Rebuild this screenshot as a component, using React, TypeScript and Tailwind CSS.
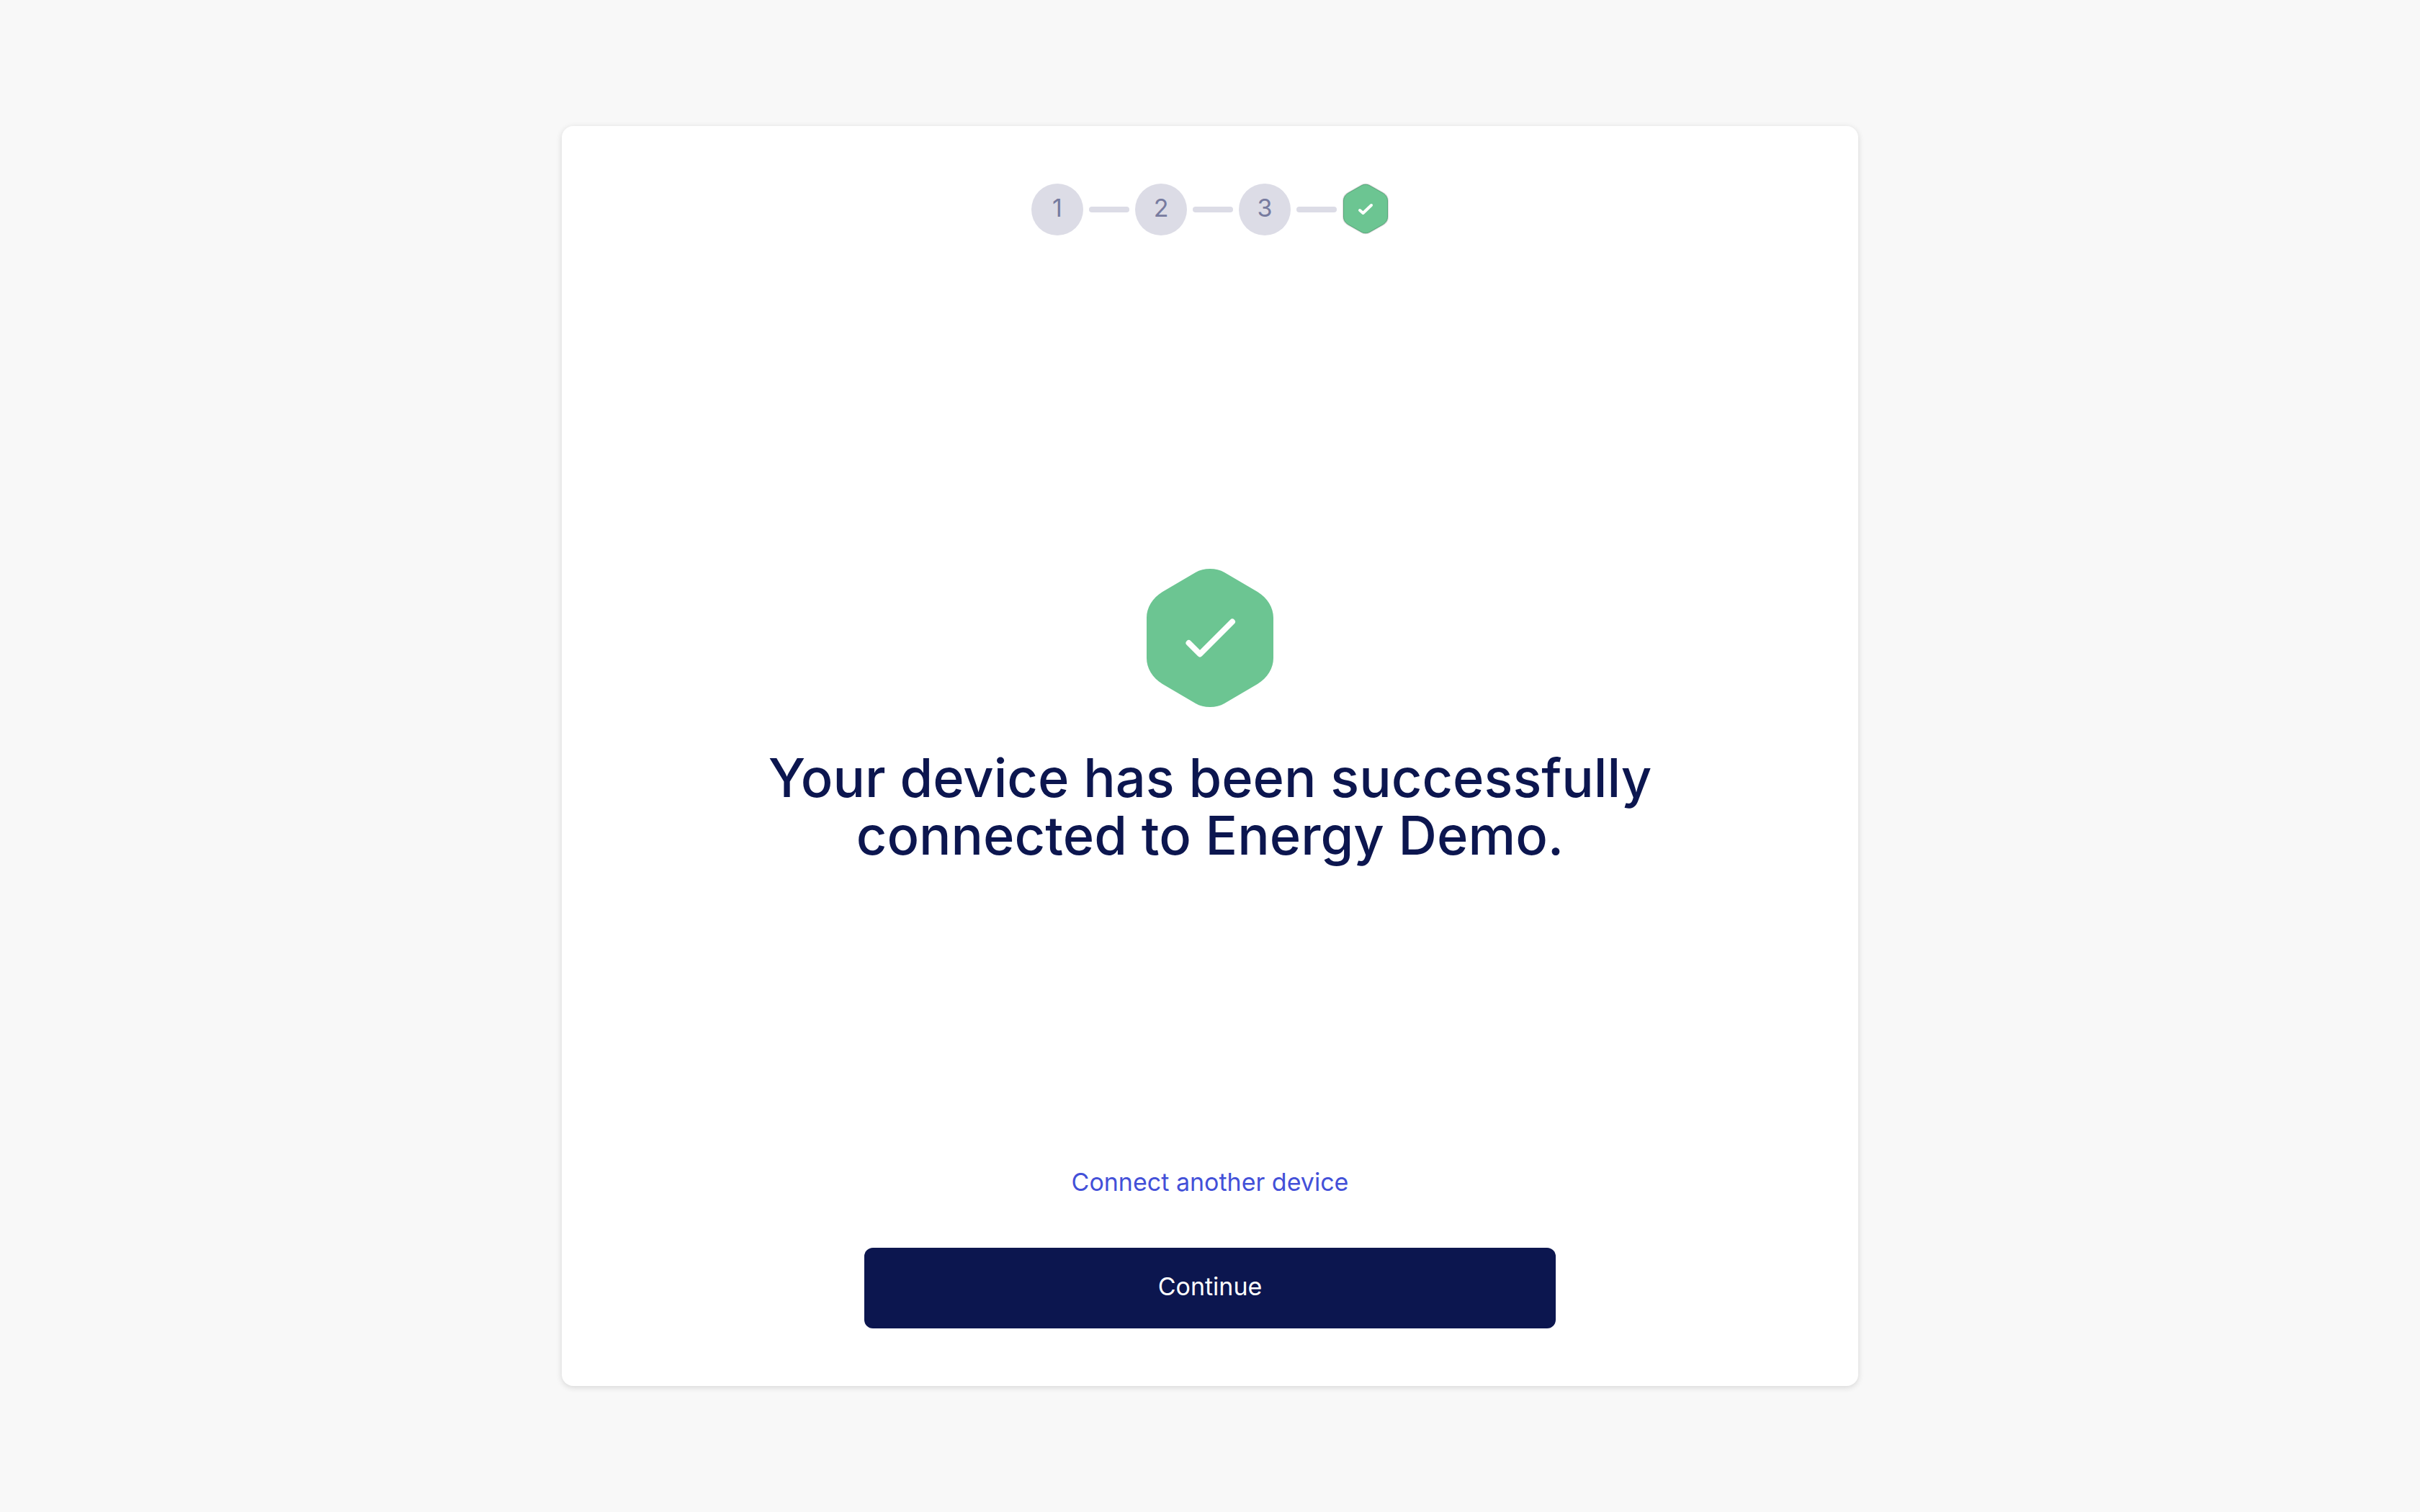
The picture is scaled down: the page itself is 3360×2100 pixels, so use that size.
import { Fragment } from 'react';

const steps = [1, 2, 3];

function StepDone() {
  return (
    <svg role="img" aria-label="Completed" viewBox="0 0 64 72" className="h-[72px] w-16 overflow-visible">
      <path
        d="M26 3C29.5 0.8 34.5 0.8 38 3L56.5 13.5C60.5 16 62.5 20 62.5 24V46C62.5 50 60.5 54 56.5 56.5L38 67C34.5 69.2 29.5 69.2 26 67L7.5 56.5C3.5 54 1.5 50 1.5 46V24C1.5 20 3.5 16 7.500 13.5Z"
        fill="#6cc592"
        stroke="#000"
        strokeOpacity="0.14"
        strokeWidth="3"
      />
      <path
        d="M26 3C29.5 0.8 34.5 0.8 38 3L56.5 13.5C60.5 16 62.5 20 62.5 24V46C62.5 50 60.5 54 56.5 56.5L38 67C34.5 69.2 29.5 69.2 26 67L7.5 56.5C3.5 54 1.5 50 1.5 46V24C1.5 20 3.5 16 7.5 13.5Z"
        fill="#6cc592"
        stroke="#5aa97c"
        strokeWidth="1"
      />
      <path d="M24 37L28.5 41L40 30" fill="none" stroke="#fff" strokeWidth="4" strokeLinecap="round" strokeLinejoin="round" />
    </svg>
  );
}

function SuccessBadge() {
  return (
    <svg aria-hidden="true" viewBox="0 0 176 192" className="h-48 w-44">
      <path
        d="M68 5C79 -1.6 97 -1.6 108 5L154 32C168 40.5 176 54 176 68V124C176 138 168 151.5 154 160L108 187C97 193.6 79 193.6 68 187L22 160C8 151.5 0 138 0 124V68C0 54 8 40.5 22 32Z"
        fill="#6cc592"
      />
      <path d="M58.5 103L74 118.5L119 73.5" fill="none" stroke="#fff" strokeWidth="8" strokeLinecap="round" strokeLinejoin="round" />
    </svg>
  );
}

export default function App() {
  return (
    <div className="flex min-h-screen flex-col items-center bg-[#f8f8f8] px-8 py-[175px] font-['Inter',sans-serif] text-[34px] leading-10">
      <main className="flex w-full max-w-[1800px] flex-1 flex-col items-center rounded-2xl bg-white px-8 py-20 shadow-[0_2px_8px_rgba(0,0,0,0.14)]">
        <ol className="mb-10 flex items-center gap-2">
          {steps.map((step) => (
            <Fragment key={step}>
              <li className="flex size-[72px] items-center justify-center rounded-full bg-[#dcdce6] pb-1 text-[#777b9f]">{step}</li>
              <li aria-hidden="true" className="h-2 w-14 rounded-full bg-[#dcdce6]" />
            </Fragment>
          ))}
          <li>
            <StepDone />
          </li>
        </ol>

        <section className="flex flex-1 flex-col items-center justify-center gap-[58px]">
          <SuccessBadge />
          <h1 className="max-w-[1300px] text-center text-[74px] leading-[80px] font-medium text-[#0c164f]">
            Your device has been successfully connected to Energy Demo.
          </h1>
        </section>

        <a href="#connect" className="text-[#4350d8]">
          Connect another device
        </a>
        <button type="button" className="mt-[71px] h-28 w-full max-w-[960px] rounded-xl bg-[#0c164f] pb-1 text-white">
          Continue
        </button>
      </main>
    </div>
  );
}
